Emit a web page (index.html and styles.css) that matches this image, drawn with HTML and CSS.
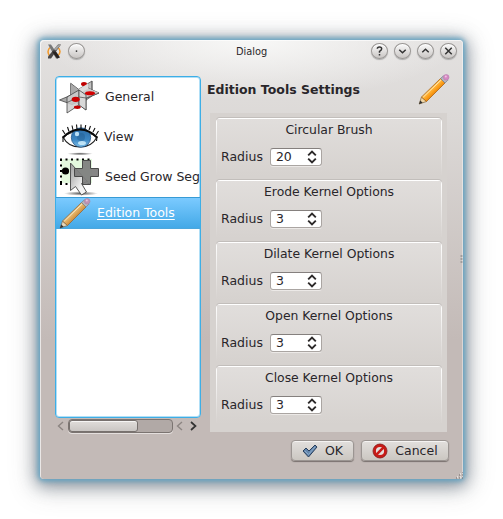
FILE: index.html
```html
<!DOCTYPE html>
<html lang="en">
<head>
<meta charset="utf-8">
<title>Dialog</title>
<link rel="stylesheet" href="styles.css">
</head>
<body>
<svg width="0" height="0" class="defs">
  <defs>
    <linearGradient id="gold" x1="0" y1="0" x2="1" y2="1"><stop offset=".4" stop-color="#ffc65c"/><stop offset=".5" stop-color="#ffa928"/><stop offset=".6" stop-color="#f08a08"/></linearGradient>
    <linearGradient id="plane" x1="0" y1="0" x2="1" y2="1"><stop offset="0" stop-color="#9a9a9a"/><stop offset="1" stop-color="#e6e6e6"/></linearGradient>
    <linearGradient id="iris" x1="0" y1="0" x2="0" y2="1"><stop offset="0" stop-color="#2a6aa5"/><stop offset=".6" stop-color="#3c86c2"/><stop offset="1" stop-color="#7cc0ea"/></linearGradient>
    <linearGradient id="arrow" x1="0" y1="0" x2="1" y2="1"><stop offset="0" stop-color="#999"/><stop offset=".7" stop-color="#f4f4f4"/></linearGradient>
    <radialGradient id="shade"><stop offset="0" stop-color="#000" stop-opacity=".65"/><stop offset="1" stop-color="#000" stop-opacity="0"/></radialGradient>
    <symbol id="pencil" viewBox="0 0 32 32">
      <path d="M1.200 31 3.500 24 8.500 28.500Z" fill="#efd5a5" stroke="#80643b" stroke-width=".7"/>
      <path d="M1 31.200 2.200 27.500 4.700 29.700Z" fill="#333"/>
      <path class="barrel" d="M3.500 24 22.500 5.500 27 10 8.500 28.500Z" stroke="#a8651a" stroke-width=".8"/>
      <path d="M5.200 24.200 23.200 7" stroke="#ffe9b5" stroke-width=".9"/>
      <path d="M22.500 5.500 25.500 2.800 29.800 7.200 27 10Z" fill="#b4b7c0" stroke="#777c8b" stroke-width=".7"/>
      <circle cx="28.200" cy="4.300" r="2.800" fill="#d58ac2" stroke="#b87eb0" stroke-width=".6"/>
      <circle cx="27.800" cy="3.600" r="1" fill="#f3c1e3"/>
    </symbol>
    <symbol id="spin" viewBox="0 0 10 14"><path d="M1.200 5.400 5 1.600 8.800 5.400M1.200 8.600 5 12.400 8.800 8.600" fill="none" stroke="#2c2929" stroke-width="1.900"/></symbol>
  </defs>
</svg>
<main class="dialog">
  <header class="titlebar">
    <svg class="app" viewBox="0 0 14 14"><path d="M3 3Q-1 7 3 12M11 3q4 4 0 8" fill="none" stroke="#f39a2c" stroke-width="1.500"/><path d="M1 0h3l8 12-1 2H9Z" fill="#777"/><path d="M11 0h3L4 14H1v-2Z" fill="#4a4848"/><path d="M10 1 14 0 9 6 7 5Z" fill="#a4a4a4"/><path d="m5 7 4 0 4 6-3 1Z" fill="#282321"/></svg>
    <span class="round"><svg viewBox="0 0 16 16"><circle cx="8" cy="8" r="1" fill="#333"/></svg></span>
    <h1>Dialog</h1>
    <span class="round"><svg viewBox="0 0 16 16"><path d="M5.500 5.500Q5.500 3.300 8 3.300t2.500 2.200Q10.500 7 8 8.500v1.500M8 11.300v1.700" class="line"/></svg></span>
    <span class="round"><svg viewBox="0 0 16 16"><path d="m4.300 6.500 3.700 3.500 3.700-3.500" class="line"/></svg></span>
    <span class="round"><svg viewBox="0 0 16 16"><path d="m4.300 9.500 3.700-3.500 3.700 3.500" class="line"/></svg></span>
    <span class="round"><svg viewBox="0 0 16 16"><path d="m4.300 4.300 7.400 7.400M11.700 4.300l-7.400 7.400" class="line"/></svg></span>
  </header>
  <div class="content">
    <section class="side">
      <ul class="list">
        <li><svg class="i40" viewBox="0 0 40 40">
          <path d="M20 12 33 4v15l-13 9Z" fill="url(#plane)" stroke="#444" stroke-width=".7"/>
          <ellipse cx="25" cy="7" rx="3" ry="2" fill="#c00000"/>
          <path d="M11.700 6.300 27 18v15L11.700 21Z" fill="url(#plane)" stroke="#444" stroke-width=".8"/>
          <path d="M.5 23 29 11 40 16 13 27.500Z" fill="#a9a9a9" stroke="#444" stroke-width=".8"/>
          <path d="M20 15 29 11 40 16 27 21Z" fill="#ccc"/>
          <path d="M12 7 20 13v4l-8 3Z" fill="#aaa"/>
          <path d="M20 12 29 6.500V12l-9 4Z" fill="#ddd"/>
          <ellipse cx="31" cy="16.300" rx="5" ry="2" fill="#d20000"/>
          <path d="M8 20 20 13v15L8 36Z" fill="#ccc" fill-opacity=".85" stroke="#444" stroke-width=".8"/>
          <path d="M20 13 27 18v15l-7-5Z" fill="#d8d8d8" stroke="#444" stroke-width=".8"/>
          <path d="M27 21 40 16M8 25.500 20 20l7 1M33 4v9" fill="none" stroke="#555" stroke-width=".8"/>
          <ellipse cx="16.700" cy="22.300" rx="4" ry="2.600" fill="#c80000"/><ellipse cx="18.300" cy="30.300" rx="3.400" ry="1.700" fill="#c00000"/>
        </svg><span>General</span></li>
        <li><svg class="i40" viewBox="0 0 40 40">
          <ellipse cx="21" cy="36.800" rx="13" ry="1.500" fill="url(#shade)"/>
          <path d="M4 20Q20 9 38 20 33 30 21 30 9 30 4 20Z" fill="#fff" stroke="#222" stroke-width="1.100"/>
          <circle cx="22" cy="20.500" r="9.700" fill="url(#iris)" stroke="#24588a" stroke-width=".8"/>
          <circle cx="22" cy="20" r="4" fill="#1b4f80" opacity=".35"/><circle cx="18" cy="17" r="2.200" fill="#b9def5"/><ellipse cx="23" cy="26" rx="4" ry="2" fill="#d7f4ff" opacity=".8"/>
          <path d="M3 20Q11 11.500 21 11.500T39 20l-1.500 1.500Q30 13.500 21 13.500T4.500 21.500Z" fill="#080808"/>
          <path d="M6 17 3.500 13M10 14.500 8.500 10M14 13 13 8.500M18 12 17.500 7.500M22 12V7.500M26 12l.7-4M30 13l1.500-4M34 15l2-4M37 18l2.500-4M4 20v5M38 20l-.5 4" stroke="#111" stroke-width="1.100"/>
        </svg><span>View</span></li>
        <li><svg class="i40" viewBox="0 0 40 40">
          <path d="M2 2h31v24H2Z" fill="#e4f9df"/>
          <path d="M1 2.500h33M2 2v26" fill="none" stroke="#000" stroke-width="2" stroke-dasharray="2 3.500"/><path d="M1 27h33" stroke="#000" stroke-width="2" stroke-dasharray="2 3.500"/>
          <circle cx="6.500" cy="14" r="3.600" fill="#000"/>
          <ellipse cx="22" cy="36.500" rx="17" ry="2.200" fill="url(#shade)"/>
          <path d="M11.500 6v27.500l5-4 6 8.500 5-3-5-8.500 6-2Z" fill="url(#arrow)" stroke="#555"/>
          <path d="M23.500 3.500h8v8h8v8h-8v8h-8v-8h-8v-8h8Z" fill="#7d7d7d" fill-opacity=".93" stroke="#4a4a4a"/>
        </svg><span>Seed Grow Seg</span></li>
        <li class="selected"><svg class="pencil"><use href="#pencil"/></svg><span>Edition Tools</span></li>
      </ul>
      <div class="scroll">
        <svg viewBox="0 0 7 10"><path d="M6 1 1.500 5 6 9" class="dim"/></svg>
        <div class="track"><i></i></div>
        <svg viewBox="0 0 7 10"><path d="M6 1 1.500 5 6 9" class="dim"/></svg>
        <svg class="next" viewBox="0 0 7 10"><path d="m1 1 4.500 4L1 9" class="line"/></svg>
      </div>
    </section>
    <section class="settings">
      <div class="heading"><h2>Edition Tools Settings</h2><svg class="pencil"><use href="#pencil"/></svg></div>
      <div class="panel">
        <fieldset><h3>Circular Brush</h3><label>Radius <span class="spin">20<svg><use href="#spin"/></svg></span></label></fieldset>
        <fieldset><h3>Erode Kernel Options</h3><label>Radius <span class="spin">3<svg><use href="#spin"/></svg></span></label></fieldset>
        <fieldset><h3>Dilate Kernel Options</h3><label>Radius <span class="spin">3<svg><use href="#spin"/></svg></span></label></fieldset>
        <fieldset><h3>Open Kernel Options</h3><label>Radius <span class="spin">3<svg><use href="#spin"/></svg></span></label></fieldset>
        <fieldset><h3>Close Kernel Options</h3><label>Radius <span class="spin">3<svg><use href="#spin"/></svg></span></label></fieldset>
      </div>
    </section>
  </div>
  <footer>
    <button class="ok"><svg viewBox="0 0 16 16"><path d="m1 8 3-3 3 3 6-6 2 2-8.500 10Z" fill="#6386ad" stroke="#293f5b"/><path d="m3 8 3.500 3.500L13 4" fill="none" stroke="#8eacc9"/></svg>OK</button>
    <button class="cancel"><svg viewBox="0 0 16 16"><circle cx="8" cy="8" r="5.500" fill="#e4dedc" stroke="#c81b17" stroke-width="2.800"/><path d="m4.200 11.800 7.600-7.600" stroke="#c81b17" stroke-width="2.600"/><circle cx="8" cy="8" r="7" fill="none" stroke="#861313" stroke-width=".8"/></svg>Cancel</button>
  </footer>
  <svg class="side-grip" viewBox="0 0 3 9"><path d="M.5 1h2M.5 4h2M.5 7h2" stroke="#777"/></svg>
  <svg class="grip" viewBox="0 0 7 7"><path d="M0 6h1M3 6h1M6 6h1M3 3h1M6 3h1M6 0h1" stroke="#716b69"/><path d="M1 5h1M4 5h1M4 2h1" stroke="#fff"/></svg>
</main>
</body>
</html>
```
FILE: styles.css
```css
* { box-sizing: border-box; }
body { margin: 0; height: 519px; padding: 40px; background: #fff; color: #29262a; font: 12.5px/16px "DejaVu Sans", sans-serif; overflow: hidden; }
.defs { position: absolute; }
.dialog { position: relative; width: 423px; height: 439px; border-radius: 4px; background: radial-gradient(ellipse 210px 60px at 50% 0, #f8f8f7 0, rgba(248,248,247,0) 100%), linear-gradient(#e3e1e0 0, #dcd9d7 80px, #c3bab7 300px); box-shadow: inset 1px 1px 0 rgba(255,255,255,.65), inset -1px 0 0 rgba(255,255,255,.4), 0 0 5px 2px #64a5c5, 0 3px 16px 4px rgba(65,85,105,.55), 0 5px 27px 5px rgba(80,80,80,.25); }
.titlebar { height: 22px; display: flex; align-items: center; padding: 0 6px 0 7px; }
.titlebar h1 { flex: 1; margin: 1px 0 0; padding-left: 53px; text-align: center; font-size: 9.800px; font-weight: 400; }
.app { width: 14px; height: 15px; margin-right: 7px; }
.round { width: 17px; height: 16px; border-radius: 50%; border: 1px solid #999694; background: linear-gradient(#fafafa, #c9c6c4); box-shadow: 0 1px 1px #aaa, inset 0 1px #fff; margin-left: 6px; display: flex; }
.app + .round { margin-left: 0; }
.round svg { width: 15px; height: 14px; }
.line { fill: none; stroke: #333; stroke-width: 1.7; }
.dim { fill: none; stroke: #8c8582; stroke-width: 1.4; }
.content { display: flex; height: 370px; }
.side { width: 146px; margin: 14px 0 0 15px; flex: none; }
.list { list-style: none; margin: 0; padding: 0; height: 342px; border: 1px solid #3daee6; border-radius: 4px; background: #fff; box-shadow: inset 0 0 0 1px #b0dff7; overflow: hidden; }
.list li { height: 40px; display: flex; align-items: center; white-space: nowrap; padding-left: 3px; }
.list span { letter-spacing: -.02px; }
.i40 { width: 40px; height: 40px; flex: none; margin-right: 6px; }
.list li:nth-child(2) span { margin-left: -1px; }
.list li.selected { height: 32px; background: linear-gradient(#7bcaff, #43a9e7); border-top: 1px solid #379bd5; border-bottom: 1px solid #4ba7dd; color: #fff; text-decoration: underline; text-underline-offset: 2px; }
.pencil { width: 32px; height: 32px; flex: none; }
.barrel { fill: url(#gold); }
.selected .pencil { margin-right: 6px; filter: saturate(.6); }
.scroll { display: flex; align-items: center; height: 15px; padding: 1px 3px 0 2px; }
.scroll svg { width: 7px; height: 10px; flex: none; }
.track { width: 105px; height: 14px; border: 1px solid #7b7471; border-radius: 4px; background: #b1a9a6; box-shadow: 0 1px #e4dfdd; margin: 0 3px 0 4px; padding: 0; }
.track i { display: block; width: 69px; height: 12px; border: 1px solid #77716e; border-radius: 3px; background: linear-gradient(#e0ddda, #cac6c3); box-shadow: inset 0 1px #f6f5f4; }
.scroll .next { margin-left: 7px; }
.settings { flex: 1; padding: 11px 16px 0 6px; }
.heading { height: 40px; display: flex; justify-content: space-between; margin-right: -3px; }
.heading h2 { margin: 9px 0 0; font-size: 12.5px; white-space: nowrap; line-height: 16px; }
.panel { height: 319px; margin-left: 3px; padding: 5px 5px 5px 6px; background: #d6d2cf; }
fieldset { height: 58px; margin: 0 0 4px; padding: 4px 5px; border: 0; border-radius: 4px 4px 0 0; background: linear-gradient(90deg, #fff, #fff) 0 0 / 100% 1px no-repeat, linear-gradient(#fff, #d6d2cf) 0 0 / 1px 100% no-repeat, linear-gradient(#fff, #d6d2cf) 100% 0 / 1px 100% no-repeat, linear-gradient(#e1dedc, #d6d2cf); box-shadow: 0 -1px rgba(150,145,142,.3); }
h3 { margin: 0; font-size: 12.400px; line-height: 16px; font-weight: 400; text-align: center; letter-spacing: -.02px; }
label { display: flex; height: 19px; align-items: center; margin-top: 9px; font-size: 12.5px; }
.spin { display: flex; align-items: center; justify-content: space-between; width: 52px; height: 18px; margin-left: 7px; padding: 0 4px 0 5px; border: 1px solid #aaa5a2; border-top-color: #85807e; border-radius: 3px; background: #fff; box-shadow: 0 1px #ece9e7; }
.spin svg { width: 10px; height: 14px; }
footer { display: flex; justify-content: flex-end; gap: 7px; padding: 8px 14px 0; }
button { height: 21px; border: 1px solid #9b9592; border-radius: 4px; background: linear-gradient(#e2dfdd, #cbc7c1); box-shadow: 0 1px 1px #79716e, inset 0 1px #f5f3f2; font: 12.5px "DejaVu Sans", sans-serif; color: #29262a; padding: 0; display: flex; align-items: center; justify-content: center; gap: 7px; }
button svg { width: 16px; height: 16px; }
.ok { width: 63px; }
.cancel { width: 88px; }
.side-grip { position: absolute; width: 3px; height: 9px; right: 0; top: 215px; }
.grip { position: absolute; width: 7px; height: 7px; right: 0; bottom: 0; }
```
